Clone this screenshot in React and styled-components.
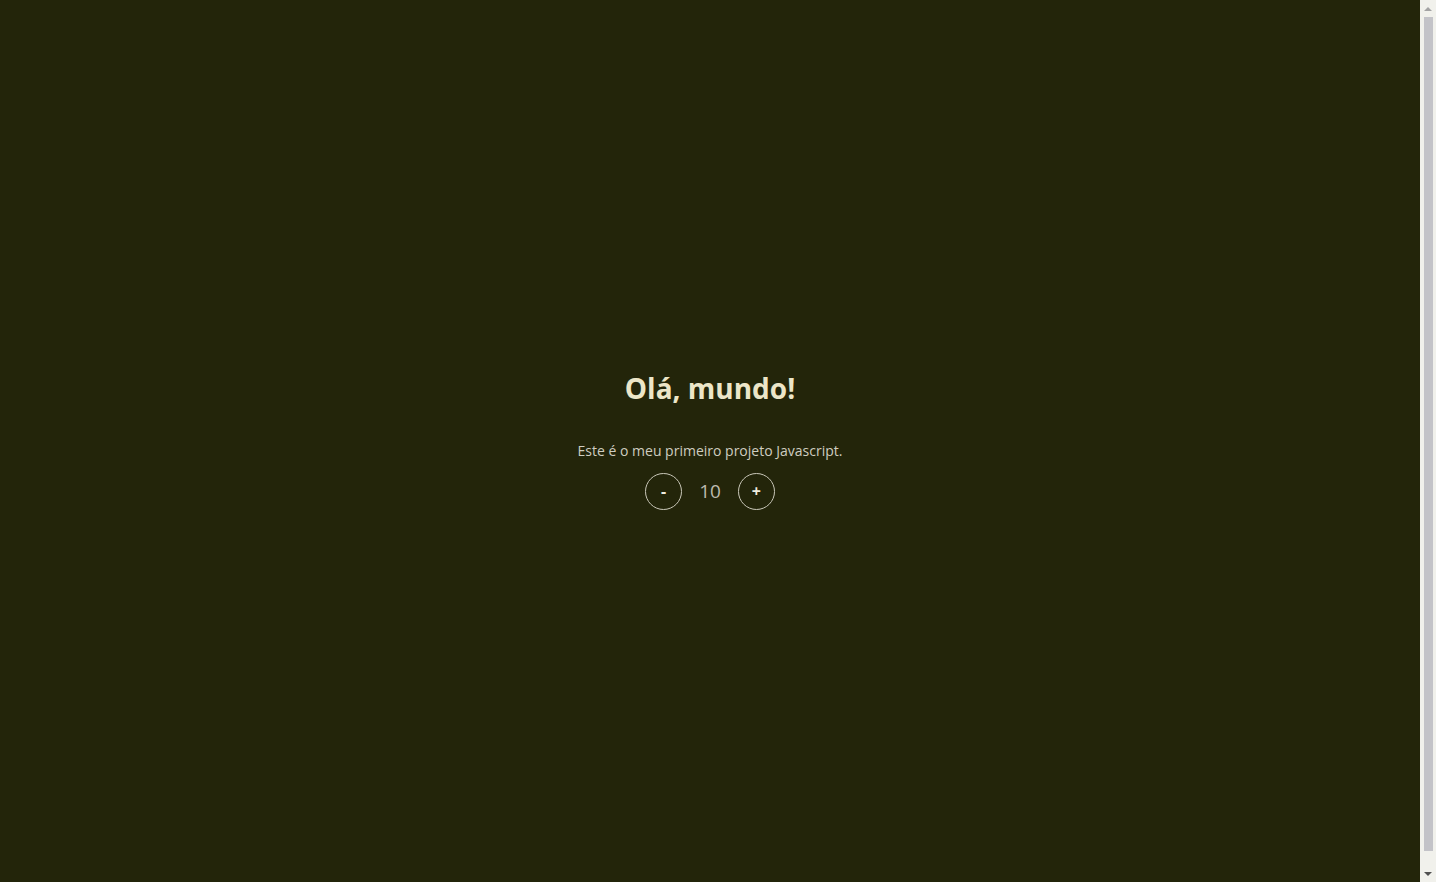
import styled, { createGlobalStyle } from "styled-components";
import { useState } from "react";

const Global = createGlobalStyle`
  html, body { margin: 0; padding: 0; overflow: hidden; }
  body {
    background: #23250a;
    font-family: "Open Sans", "Noto Sans", sans-serif;
  }
`;

const Shell = styled.div`
  display: flex;
  height: 100vh;
`;

const Page = styled.main`
  flex: 1;
  padding-bottom: 4px;
  display: flex;
  flex-direction: column;
  align-items: center;
  justify-content: center;
`;

const Title = styled.h1`
  margin: 0 0 34px;
  font-size: 28px;
  line-height: 38px;
  font-weight: 700;
  color: #ece6c8;
`;

const Lead = styled.p`
  margin: 0 0 13px;
  font-size: 14px;
  line-height: 19px;
  color: #cfcdc0;
`;

const Counter = styled.div`
  display: flex;
  align-items: center;
  gap: 17px;
`;

const RoundButton = styled.button`
  width: 37px;
  height: 37px;
  border-radius: 50%;
  border: 1px solid #c9c7b8;
  background: transparent;
  color: #f0ede0;
  font-family: inherit;
  font-size: 16px;
  font-weight: 700;
  line-height: 1;
  padding: 0;
  cursor: pointer;
`;

const Value = styled.span`
  min-width: 21px;
  text-align: center;
  font-size: 19px;
  color: #bdbbae;
`;

/* browser scrollbar, drawn as the reference shows it */
const ScrollTrack = styled.div`
  width: 16px;
  background: #f1f1ec;
  display: flex;
  flex-direction: column;
  align-items: center;
`;

const Arrow = styled.div`
  height: 17px;
  display: flex;
  align-items: center;
  justify-content: center;
  &::before {
    content: "";
    border-left: 4px solid transparent;
    border-right: 4px solid transparent;
    ${(p) =>
      p.$down
        ? "border-top: 4px solid #505050;"
        : "border-bottom: 4px solid #a3a3a3;"}
  }
`;

const Thumb = styled.div`
  flex: 1;
  width: 9px;
  margin: 0 auto 14px;
  background: #c3c3c8;
`;

export default function App() {
  const [count, setCount] = useState(10);
  return (
    <>
      <Global />
      <Shell>
        <Page>
          <Title>Olá, mundo!</Title>
          <Lead>Este é o meu primeiro projeto Javascript.</Lead>
          <Counter>
            <RoundButton onClick={() => setCount(count - 1)}>-</RoundButton>
            <Value>{count}</Value>
            <RoundButton onClick={() => setCount(count + 1)}>+</RoundButton>
          </Counter>
        </Page>
        <ScrollTrack>
          <Arrow />
          <Thumb />
          <Arrow $down />
        </ScrollTrack>
      </Shell>
    </>
  );
}
